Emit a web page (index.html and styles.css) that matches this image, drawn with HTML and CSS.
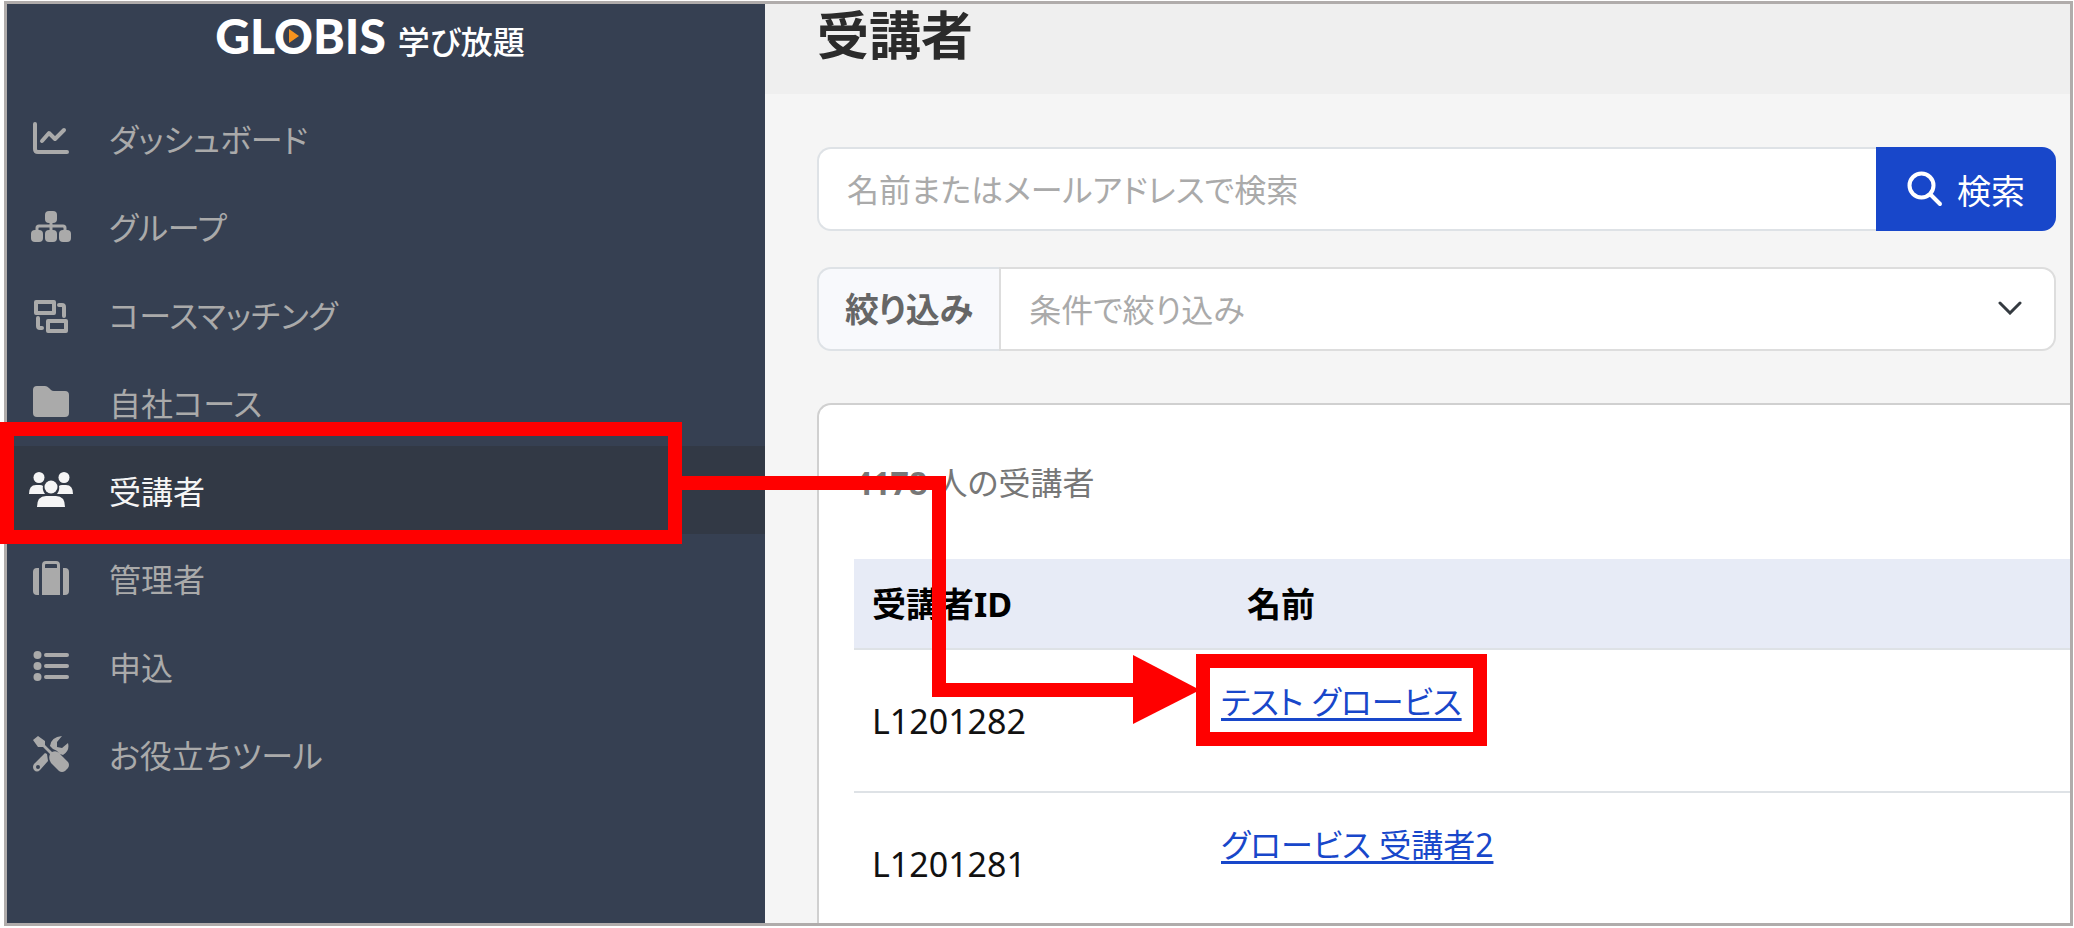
FILE: index.html
```
<!DOCTYPE html>
<html lang="ja">
<head>
    <meta charset="utf-8">
    <title>受講者</title>
    <link rel="stylesheet" href="styles.css">
</head>
<body>
    <div class="app">
        <aside class="sidebar">
            <div class="logo">
                <span class="logo-name">GL<span class="logo-o">O<svg class="logo-play" viewBox="0 0 10 14"><path d="M0 0L10 7L0 14Z"/></svg></span>BIS</span>
                <span class="logo-sub">学び放題</span>
            </div>
            <nav class="menu">
                <a class="menu-item" href="#">
                    <svg class="icon" viewBox="0 0 36 36"><path class="line" d="M2 4V29Q2 32 5 32H34M9 21L16 13L22 19L31 10"/></svg>
                    ダッシュボード
                </a>
                <a class="menu-item" href="#">
                    <svg class="icon wide" viewBox="0 0 40 36"><rect x="14" y="3" width="12" height="12" rx="4"/><rect x="0" y="22" width="12" height="12" rx="4"/><rect x="14" y="22" width="12" height="12" rx="4"/><rect x="28" y="22" width="12" height="12" rx="4"/><path class="line thin" d="M20 12V24M6 24V20Q6 18 8 18H32Q34 18 34 20V24"/></svg>
                    グループ
                </a>
                <a class="menu-item" href="#">
                    <svg class="icon" viewBox="0 0 36 36"><path class="line" d="M3 6H21V17H3ZM15 25H33V35H15ZM26 9H29Q31 9 31 11V20M5 22V30Q5 32 7 32H9"/></svg>
                    コースマッチング
                </a>
                <a class="menu-item" href="#">
                    <svg class="icon" viewBox="0 0 36 36"><path d="M0 6Q0 2 4 2H12Q14 2 16 4L18 6Q19 7 21 7H32Q36 7 36 11V29Q36 33 32 33H4Q0 33 0 29Z"/></svg>
                    自社コース
                </a>
                <a class="menu-item active" href="#">
                    <svg class="icon wide" viewBox="0 0 44 36"><circle cx="10" cy="5.5" r="5.5"/><circle cx="35" cy="5.5" r="5.5"/><circle cx="22" cy="15" r="6.5"/><path d="M0 22Q0 13 7 13H11Q13 13 14 14Q13 18 16 22ZM44 22Q44 13 37 13H33Q31 13 30 14Q31 18 28 22ZM8 35Q8 24 17 24H27Q36 24 36 35Z"/></svg>
                    受講者
                </a>
                <a class="menu-item" href="#">
                    <svg class="icon" viewBox="0 0 36 36"><path d="M6 8V35H4Q0 35 0 31V12Q0 8 4 8ZM30 8V35H32Q36 35 36 31V12Q36 8 32 8ZM9 35V5Q9 1 13 1H23Q27 1 27 5V35ZM12 5V8H24V5Q24 4 23 4H13Q12 4 12 5Z" fill-rule="evenodd"/></svg>
                    管理者
                </a>
                <a class="menu-item" href="#">
                    <svg class="icon" viewBox="0 0 36 36"><circle cx="4.5" cy="7" r="4"/><circle cx="4.5" cy="18" r="4"/><circle cx="4.5" cy="29" r="4"/><path class="line" d="M13 7H34M13 18H34M13 29H34"/></svg>
                    申込
                </a>
                <a class="menu-item" href="#">
                    <svg class="icon" viewBox="0 0 36 36"><path d="M5 0L12 5V9L19 16Q23 14 26 17L35 26Q37 29 35 32L32 35Q29 37 26 35L18 27Q15 23 17 18L10 11H5L0 4ZM20 13L17 10Q18 1 29 0L24 6V11L29 12L35 7Q37 15 30 19L27 18Q24 14 20 13ZM14 18L15 25L7 34Q4 37 1 34Q-1 31 1 28L12 17ZM5 29A2 2 0 1 0 5 33A2 2 0 1 0 5 29Z" fill-rule="evenodd"/></svg>
                    お役立ちツール
                </a>
            </nav>
        </aside>

        <main class="main">
            <header class="page-header">
                <h1>受講者</h1>
            </header>
            <div class="content">
                <form class="search" onsubmit="return false">
                    <input class="search-input" type="text" aria-label="検索" placeholder="名前またはメールアドレスで検索">
                    <button class="search-button" type="submit">
                        <svg class="icon" viewBox="0 0 36 36"><circle class="line" cx="14.5" cy="14.5" r="12"/><path class="line" d="M24 24L33 33"/></svg>
                        検索
                    </button>
                </form>
                <div class="filter">
                    <label class="filter-label" for="filter">絞り込み</label>
                    <div class="filter-box">
                        <select id="filter" class="filter-select">
                            <option>条件で絞り込み</option>
                        </select>
                        <svg class="chevron" viewBox="0 0 24 14"><path d="M2 2L12 12L22 2"/></svg>
                    </div>
                </div>
                <section class="card">
                    <p class="count"><b>4178</b> 人の受講者</p>
                    <table class="learners">
                        <thead>
                            <tr><th class="col-id">受講者ID</th><th class="col-name">名前</th></tr>
                        </thead>
                        <tbody>
                            <tr><td>L1201282</td><td class="name"><a href="#">テスト グロービス</a></td></tr>
                            <tr><td>L1201281</td><td class="name"><a href="#">グロービス 受講者2</a></td></tr>
                        </tbody>
                    </table>
                </section>
            </div>
        </main>
    </div>

    <!-- Guide marks: menu item -> learner link -->
    <svg class="guide" width="1500" height="760" viewBox="0 0 1500 760">
        <rect x="7" y="429" width="668" height="108"/>
        <path d="M682 483H939V690H1135"/>
        <path class="guide-head" d="M1133 655L1200 690L1133 724Z"/>
        <rect x="1203" y="661" width="277" height="78"/>
    </svg>
</body>
</html>
```
FILE: styles.css
```
* {
    box-sizing: border-box;
}
body {
    margin: 0;
    background-color: #fff;
    font-family: "Noto Sans", "Noto Sans CJK JP", sans-serif;
    font-size: 34px;
    font-feature-settings: "palt";
}
.app {
    display: flex;
    height: calc(100vh - 3px);
    margin: 1px 1px 2px 4px;
    border: 3px solid #b0acab;
    overflow: hidden;
}

/* Sidebar */
.sidebar {
    flex: 0 0 758px;
    background-color: #364052;
}
.logo {
    display: flex;
    justify-content: center;
    align-items: baseline;
    gap: 12px;
    height: 90px;
    padding-right: 32px;
    color: #fff;
    line-height: 64px;
}
.logo-name {
    font-family: Lato, sans-serif;
    font-size: 48px;
    font-weight: 900;
}
.logo-o {
    position: relative;
}
.logo-play {
    position: absolute;
    left: 15px;
    top: 22px;
    width: 10px;
    height: 14px;
    fill: #f7931e;
}
.logo-sub {
    font-size: 32px;
    font-weight: 500;
}
.menu-item {
    display: flex;
    align-items: center;
    gap: 40px;
    height: 88px;
    padding-left: 26px;
    color: #aaa;
    font-size: 32px;
    text-decoration: none;
}
.menu-item.active {
    background-color: #323945;
    color: #f5f5f5;
}
.icon {
    flex: none;
    width: 36px;
    height: 36px;
    fill: currentColor;
    overflow: visible;
}
.icon.wide {
    width: 44px;
    margin: 0 -4px;
}
.line {
    fill: none;
    stroke: currentColor;
    stroke-width: 4;
    stroke-linecap: round;
    stroke-linejoin: round;
}
.line.thin {
    stroke-width: 3;
}

/* Main */
.main {
    flex: 1;
    min-width: 0;
    background-color: #f5f5f5;
}
.page-header {
    height: 90px;
    padding-left: 52px;
    background-color: #efefef;
}
h1 {
    margin: 0;
    color: #2b2b2b;
    font-size: 52px;
    line-height: 62px;
}
.content {
    padding: 53px 0 0 52px;
}
.search,
.filter {
    display: flex;
    height: 84px;
    margin: 0 14px 36px 0;
}
.search-input {
    flex: 1;
    min-width: 0;
    padding: 0 28px;
    border: 2px solid #dee2e6;
    border-right: 0;
    border-radius: 14px 0 0 14px;
    background-color: #fff;
    font: inherit;
    font-size: 32px;
    font-feature-settings: "palt";
}
.search-input::placeholder {
    color: #aaa;
}
.search-button {
    display: flex;
    align-items: center;
    justify-content: center;
    gap: 14px;
    width: 180px;
    border: 0;
    border-radius: 0 14px 14px 0;
    background-color: #1847ca;
    color: #fff;
    font: inherit;
}
.filter {
    margin-bottom: 52px;
}
.filter-label {
    display: flex;
    align-items: center;
    padding: 0 26px;
    border: 2px solid #dee2e6;
    border-right: 0;
    border-radius: 14px 0 0 14px;
    background-color: #f8f9fc;
    color: #666;
    font-weight: bold;
    line-height: 44px;
}
.filter-box {
    position: relative;
    flex: 1;
}
.filter-select {
    width: 100%;
    height: 100%;
    padding: 0 28px;
    border: 2px solid #ddd;
    border-radius: 0 14px 14px 0;
    background-color: #fff;
    color: #aaa;
    font: inherit;
    font-size: 32px;
    font-feature-settings: "palt";
    appearance: none;
}
.chevron {
    position: absolute;
    right: 34px;
    top: 34px;
    width: 24px;
    height: 14px;
    fill: none;
    stroke: #343a40;
    stroke-width: 3;
    stroke-linecap: round;
    pointer-events: none;
}
.card {
    height: 100vh;
    padding: 46px 0 0 35px;
    border: 2px solid #d0d0d0;
    border-right: 0;
    border-radius: 14px 0 0 0;
    background-color: #fff;
}
.count {
    margin: 0 0 44px;
    color: #777;
    font-size: 32px;
    line-height: 64px;
}
.learners {
    width: 100%;
    border-collapse: collapse;
    table-layout: fixed;
}
th {
    height: 90px;
    padding: 0 18px 2px;
    border-bottom: 2px solid #dee2e6;
    background-color: #e7ebf6;
    text-align: left;
}
.col-id {
    width: 345px;
}
.col-name {
    padding-left: 48px;
}
td {
    height: 143px;
    padding: 0 18px;
    border-bottom: 2px solid #dee2e6;
    color: #111;
}
.name {
    padding-top: 26px;
    padding-left: 22px;
    font-size: 32px;
    line-height: 52px;
    vertical-align: top;
}
.name a {
    color: #1847ca;
    text-underline-offset: 4px;
}

.guide {
    position: absolute;
    left: 0;
    top: 0;
    fill: none;
    stroke: #f00;
    stroke-width: 14;
    pointer-events: none;
}
.guide-head {
    fill: #f00;
    stroke: none;
}
```
